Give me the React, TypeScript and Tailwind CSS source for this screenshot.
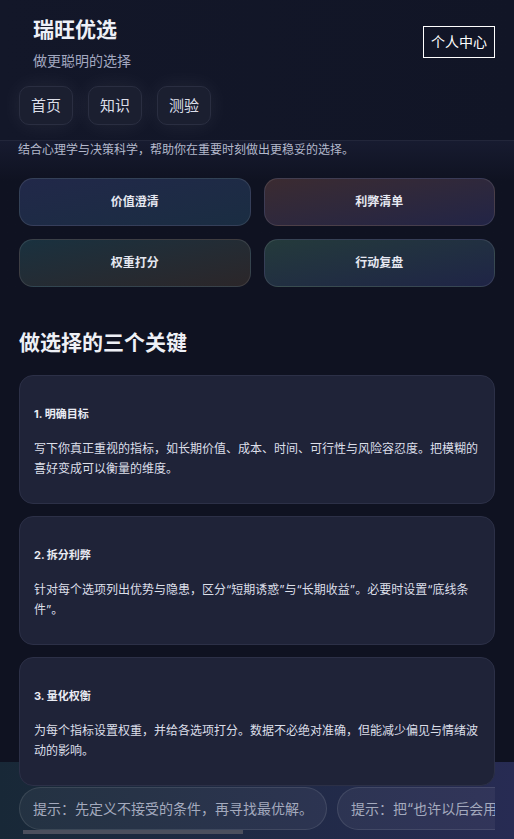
const tools = [
  { label: "价值澄清", bg: "bg-gradient-to-br from-[#212849] to-[#1a2d42]" },
  { label: "利弊清单", bg: "bg-gradient-to-br from-[#3b2b31] to-[#222446]" },
  { label: "权重打分", bg: "bg-gradient-to-br from-[#19313f] to-[#2b2629]" },
  { label: "行动复盘", bg: "bg-gradient-to-br from-[#243a3b] to-[#1f2446]" },
]

const keys = [
  {
    title: "1. 明确目标",
    body: "写下你真正重视的指标，如长期价值、成本、时间、可行性与风险容忍度。把模糊的喜好变成可以衡量的维度。",
  },
  {
    title: "2. 拆分利弊",
    body: "针对每个选项列出优势与隐患，区分“短期诱惑”与“长期收益”。必要时设置“底线条件”。",
  },
  {
    title: "3. 量化权衡",
    body: "为每个指标设置权重，并给各选项打分。数据不必绝对准确，但能减少偏见与情绪波动的影响。",
  },
]

const tips = [
  "提示：先定义不接受的条件，再寻找最优解。",
  "提示：把“也许以后会用”换成“现在是否需要”。",
  "提示：列出最坏情况，确认自己可以承受，再做最后决定。",
]

export default function App() {
  return (
    <div
      className="h-[839px] overflow-hidden bg-[#0f1221] text-white"
      style={{ fontFamily: 'Inter, "Noto Sans CJK SC", sans-serif' }}
    >
      {/* Header */}
      <header className="border-b border-[#22263a] bg-gradient-to-r from-[#131729] to-[#111526] px-[19px] pt-[16px] pb-[15px]">
        <div className="flex items-start justify-between">
          <div className="pl-[14px]">
            <h1 className="text-[21px] leading-[28px] font-bold text-[#eef0f7]">瑞旺优选</h1>
            <p className="mt-[7px] text-[14px] leading-[20px] text-[#a3a8c0]">做更聪明的选择</p>
          </div>
          <button className="mt-[10px] border border-white px-[7px] text-[14px] leading-[30px] text-white">
            个人中心
          </button>
        </div>
        <nav className="mt-[15px] flex gap-[15px]">
          {["首页", "知识", "测验"].map((n) => (
            <a
              key={n}
              className="rounded-[10px] border border-[#2a2e41] bg-[#1b1f30] px-[11px] py-[8px] text-[15px] leading-[21px] text-[#dcdee8] shadow-[0_0_22px_rgba(255,255,255,0.07)]"
            >
              {n}
            </a>
          ))}
        </nav>
      </header>

      {/* Hero */}
      <section className="bg-gradient-to-b from-[#171b30] to-[#0f1221] to-[40px]">
        <p className="pl-[18px] text-[12px] leading-[18px] text-[#b3b8cb]">
          结合心理学与决策科学，帮助你在重要时刻做出更稳妥的选择。
        </p>
        <div className="mt-[19px] grid grid-cols-2 gap-[13px] px-[19px]">
          {tools.map((t) => (
            <div
              key={t.label}
              className={`flex h-[48px] items-center justify-center rounded-[14px] border border-white/10 text-[12px] font-bold text-[#e6e8f1] ${t.bg}`}
            >
              {t.label}
            </div>
          ))}
        </div>
      </section>

      {/* Keys */}
      <section className="relative z-10 px-[19px]">
        <h2 className="mt-[42px] text-[21px] leading-[28px] font-bold text-[#eef0f6]">做选择的三个关键</h2>
        <div className="mt-[18px] flex flex-col gap-[12px]">
          {keys.map((k) => (
            <div
              key={k.title}
              className="rounded-[14px] border border-[#2c3047] bg-[#1f2338] px-[14px] pt-[30px] pb-[24px]"
            >
              <h3 className="text-[11px] leading-[16px] font-bold text-[#e9ebf3]">{k.title}</h3>
              <p className="mt-[17px] text-[12px] leading-[20px] text-[#dcdfe9]">{k.body}</p>
            </div>
          ))}
        </div>
      </section>

      {/* Tips strip */}
      <footer className="-mt-[24px] bg-gradient-to-r from-[#182837] to-[#272b53] px-[19px] pt-[25px] pb-[5px]">
        <div className="flex gap-[10px] overflow-x-auto [scrollbar-width:none]">
          {tips.map((t) => (
            <span
              key={t}
              className="shrink-0 whitespace-nowrap rounded-full border border-white/10 bg-white/5 px-[13px] py-[10px] text-[14px] leading-[21px] text-[#a4aabe]"
            >
              {t}
            </span>
          ))}
        </div>
        <div className="ml-[4px] h-[4px] w-[220px] bg-[#4c4f5d]" />
      </footer>
    </div>
  )
}
